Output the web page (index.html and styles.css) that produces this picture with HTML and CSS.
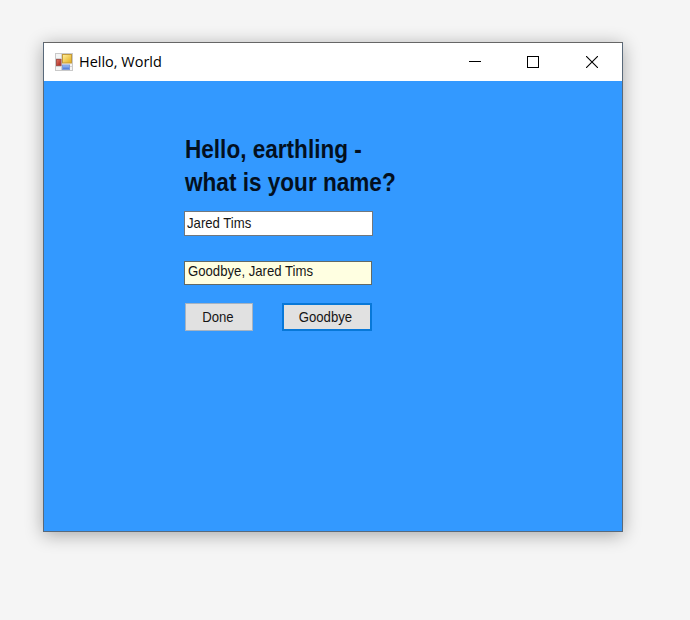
FILE: index.html
```html
<!DOCTYPE html>
<html lang="en">
<head>
<meta charset="utf-8">
<title>Hello, World</title>
<link rel="stylesheet" href="styles.css">
</head>
<body>
<main class="window">
  <header class="titlebar">
    <svg class="app-icon" width="18" height="18" viewBox="0 0 18 18">
      <defs>
        <linearGradient id="gold" x1="0" y1="0" x2="1" y2="1"><stop offset="0" stop-color="#fff0a0"/><stop offset="1" stop-color="#e4ac18"/></linearGradient>
        <linearGradient id="red" x1="0" y1="0" x2="1" y2="1"><stop offset="0" stop-color="#e07868"/><stop offset="1" stop-color="#a82018"/></linearGradient>
        <linearGradient id="blue" x1="0" y1="0" x2="0" y2="1"><stop offset="0" stop-color="#a4c6fa"/><stop offset="1" stop-color="#4472d4"/></linearGradient>
      </defs>
      <rect x=".5" y=".5" width="17" height="17" fill="#f4f4f4" stroke="#c9c9c9"/>
      <path d="M6.5 1v16M1 5.5h6M1 13.5h16" stroke="#d2d2d2"/>
      <rect x="7.5" y="1.5" width="9" height="8.5" fill="url(#gold)" stroke="#c39a3c"/>
      <rect x="1.5" y="6.5" width="4.5" height="6" fill="url(#red)" stroke="#a85048"/>
      <rect x="7.5" y="12" width="7" height="4.5" fill="url(#blue)" stroke="#7f9cd8"/>
    </svg>
    <span class="title">Hello, World</span>
    <div class="controls">
      <svg width="12" height="12" viewBox="0 0 12 12" shape-rendering="crispEdges"><path d="M0 5.5h12" stroke="#000"/></svg>
      <svg width="12" height="12" viewBox="0 0 12 12"><rect x=".5" y=".5" width="11" height="11" fill="none" stroke="#000"/></svg>
      <svg width="12" height="12" viewBox="0 0 12 12"><path d="M0 0l12 12M12 0L0 12" stroke="#000" stroke-width="1.1"/></svg>
    </div>
  </header>
  <section class="form">
    <h1 class="prompt">Hello, earthling -<br>what is your name?</h1>
    <div class="field"><span class="label">Jared Tims</span></div>
    <div class="output"><span class="label">Goodbye, Jared Tims</span></div>
    <div class="actions">
      <div class="button done"><span class="label">Done</span></div>
      <div class="button goodbye"><span class="label">Goodbye</span></div>
    </div>
  </section>
</main>
</body>
</html>
```
FILE: styles.css
```css
* { box-sizing: border-box; }
body {
  margin: 0;
  padding: 42px 0 0 43px;
  height: 620px;
  overflow: hidden;
  background: #f5f5f5;
  font-family: "Liberation Sans", Arial, sans-serif;
  color: #000;
}
.window {
  width: 580px;
  height: 490px;
  border: 1px solid #59697a;
  border-top-color: #666;
  background: #39f;
  box-shadow: 0 3px 17px rgba(0, 0, 0, .32);
}
.titlebar {
  display: flex;
  align-items: center;
  height: 38px;
  padding: 0 24px 0 11px;
  background: #fff;
}
.title {
  margin: -2px 0 0 6px;
  font: 15px/20px "Open Sans", sans-serif;
  white-space: nowrap;
  transform: scaleX(.965);
  transform-origin: 0 0;
}
.controls {
  display: flex;
  margin-left: auto;
}
.controls svg { display: block; }
.controls svg:nth-child(2) { margin: 0 47px 0 46px; }
.form { padding: 52px 0 0 140px; }
.prompt {
  width: 300px;
  margin: 0 0 12px 1px;
  font-size: 26px;
  line-height: 33px;
  font-weight: 700;
  color: #03101f;
  white-space: nowrap;
  transform: scaleX(.868);
  transform-origin: 0 0;
}
.label {
  display: inline-block;
  font-size: 15px;
  line-height: 18px;
  color: #151515;
  white-space: nowrap;
  transform: scaleX(.877);
  transform-origin: 0 0;
}
.field {
  width: 189px;
  height: 25px;
  padding: 2px 0 0 2px;
  border: 1px solid #71777d;
  background: #fff;
}
.output {
  width: 188px;
  height: 24px;
  margin-top: 25px;
  padding: 0 0 0 3px;
  border: 1px solid #626a66;
  background: #ffffe1;
}
.actions {
  display: flex;
  gap: 29px;
  margin: 18px 0 0 1px;
}
.button {
  display: flex;
  justify-content: center;
  align-items: center;
  height: 28px;
  padding-right: 3px;
  background: #e1e1e1;
}
.button .label { transform-origin: 50% 0; }
.done { width: 68px; border: 1px solid #a5b3c2; }
.goodbye { width: 90px; border: 2px solid #0878d8; }
```
